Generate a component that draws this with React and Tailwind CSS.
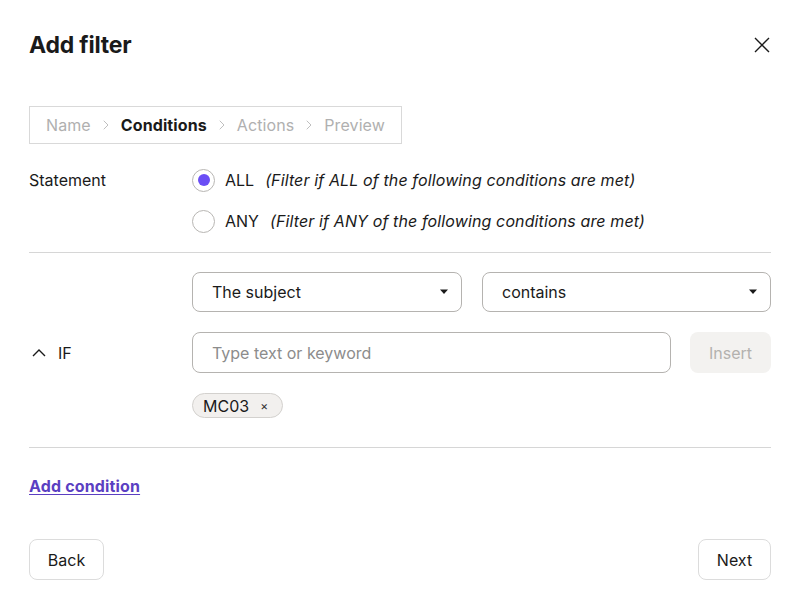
import React, { useState } from 'react';
import { ChevronRight } from 'lucide-react';

const steps = [
  { id: 'name', label: 'Name' },
  { id: 'conditions', label: 'Conditions' },
  { id: 'actions', label: 'Actions' },
  { id: 'preview', label: 'Preview' }
];

const Radio = ({ checked, onClick, label, hint }) => (
  <button type="button" onClick={onClick} className="flex items-center h-6 text-left">
    <span className="w-[23px] h-[23px] rounded-full border border-[#b8b6b3] flex items-center justify-center shrink-0">
      {checked && <span className="w-[12px] h-[12px] rounded-full bg-[#6a4ef5]" />}
    </span>
    <span className="ml-[10px] text-[16px] text-[#1a1a1a]">{label}</span>
    <span className="ml-[11px] text-[16px] italic tracking-[0.12px] text-[#1a1a1a]">{hint}</span>
  </button>
);

const Select = ({ value, className }) => (
  <div className={`h-10 rounded-lg border border-[#b5b3b0] flex items-center justify-between pl-[19px] pr-[12px] text-[16px] text-[#1a1a1a] ${className}`}>
    <span>{value}</span>
    <svg width="10" height="6" viewBox="0 0 10 6">
      <path d="M1 0.5h8L5 5z" fill="#1a1a1a" />
    </svg>
  </div>
);

const App = () => {
  const [mode, setMode] = useState('all');

  return (
    <div className="w-[800px] h-[601px] bg-white px-[29px] font-['Inter','Liberation_Sans',sans-serif] text-[#1a1a1a]">
      {/* Header */}
      <div className="flex items-center justify-between pt-[30px]">
        <h1 className="text-[23px] leading-[30px] font-bold tracking-[-0.2px]">Add filter</h1>
        <button type="button" className="mr-[1px]">
          <svg width="16" height="16" viewBox="0 0 16 16" fill="none" stroke="#1a1a1a" strokeWidth="1.4">
            <path d="M1 1l14 14M15 1L1 15" />
          </svg>
        </button>
      </div>

      {/* Steps */}
      <div className="mt-[46px] inline-flex items-center h-[38px] border border-[#d9d9d9] px-4 gap-[7px] text-[16px] tracking-[0.1px]">
        {steps.map((step, i) => (
          <React.Fragment key={step.id}>
            {i > 0 && <ChevronRight size={16} strokeWidth={1.3} className="text-[#b5b5b5]" />}
            <span className={step.id === 'conditions' ? 'font-bold text-[#1a1a1a]' : 'text-[#b0b0b0]'}>
              {step.label}
            </span>
          </React.Fragment>
        ))}
      </div>

      {/* Statement */}
      <div className="mt-6 grid grid-cols-[163px_1fr]">
        <div className="h-6 flex items-center text-[16px]">Statement</div>
        <div className="flex flex-col gap-[17px]">
          <Radio
            checked={mode === 'all'}
            onClick={() => setMode('all')}
            label="ALL"
            hint="(Filter if ALL of the following conditions are met)"
          />
          <Radio
            checked={mode === 'any'}
            onClick={() => setMode('any')}
            label="ANY"
            hint="(Filter if ANY of the following conditions are met)"
          />
        </div>
      </div>

      <div className="mt-[19px] h-px bg-[#d6d6d6]" />

      {/* Condition */}
      <div className="pt-[19px] pb-[29px] grid grid-cols-[163px_1fr] gap-y-5">
        <div />
        <div className="flex gap-5">
          <Select value="The subject" className="w-[270px]" />
          <Select value="contains" className="flex-1" />
        </div>

        <div className="flex items-center gap-[12px] pl-[3px] text-[16px]">
          <svg width="14" height="8" viewBox="0 0 14 8" fill="none" stroke="#1a1a1a" strokeWidth="1.4">
            <path d="M1 7l6-6 6 6" />
          </svg>
          <span>IF</span>
        </div>
        <div className="flex gap-[19px]">
          <div className="flex-1 h-[41px] rounded-lg border border-[#b5b3b0] flex items-center pl-[19px] text-[16px] text-[#8c8c8c]">
            Type text or keyword
          </div>
          <button type="button" className="w-[81px] h-[41px] rounded-lg bg-[#f3f2f0] text-[16px] text-[#b3b1ae]">
            Insert
          </button>
        </div>

        <div />
        <div className="flex">
          <span className="inline-flex items-center h-[25px] rounded-full border border-[#d3d1ce] bg-[#f2f0ee] pl-[10px] pr-[14px] text-[16px]">
            MC03
            <span className="ml-[11px] text-[12px] text-[#333]">×</span>
          </span>
        </div>
      </div>

      <div className="h-px bg-[#d6d6d6]" />

      <div className="mt-[26px]">
        <a href="#" className="text-[16px] leading-6 font-bold tracking-[0.15px] text-[#5b3fc2] underline underline-offset-2">
          Add condition
        </a>
      </div>

      {/* Footer */}
      <div className="mt-[41px] flex justify-between">
        <button type="button" className="w-[75px] h-[41px] rounded-lg border border-[#dcdcdc] text-[16px]">
          Back
        </button>
        <button type="button" className="w-[73px] h-[41px] rounded-lg border border-[#dcdcdc] text-[16px]">
          Next
        </button>
      </div>
    </div>
  );
};

export default App;
